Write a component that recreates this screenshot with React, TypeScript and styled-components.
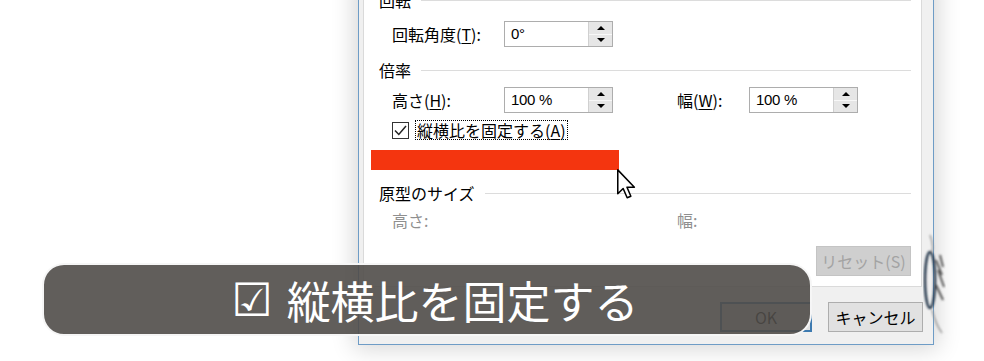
import React from "react";
import styled, { createGlobalStyle } from "styled-components";

const GlobalStyle = createGlobalStyle`
  html, body {
    margin: 0;
    padding: 0;
    background: #ffffff;
    overflow: hidden;
  }
  body {
    font-family: "Noto Sans CJK JP", "Noto Sans", sans-serif;
  }
`;

const Stage = styled.div`
  position: relative;
  width: 984px;
  height: 361px;
  overflow: hidden;
  background: #ffffff;
`;

const DialogWindow = styled.div`
  width: 574px;
  margin: -20px 0 0 358px;
  border: 1px solid #6e9cc6;
  border-top: none;
  background: #f0f0f0;
  box-shadow: 0 0 22px 4px rgba(0, 0, 0, 0.16);
  display: flex;
  flex-direction: column;
`;

const Panel = styled.div`
  margin: 0 11px 0 4px;
  padding: 10px 10px 10px 15px;
  background: #ffffff;
  border: 1px solid #dadada;
  border-top: none;
  display: flex;
  flex-direction: column;
  color: #000;
  font-size: 16px;
  line-height: 20px;
`;

const GroupHeading = styled.div<{ $gap: number }>`
  display: flex;
  align-items: center;
  gap: 10px;
  height: 20px;
  margin-top: ${(p) => p.$gap}px;
  white-space: nowrap;

  &::after {
    content: "";
    flex: 1;
    height: 1px;
    background: #dcdcdc;
    box-shadow: 0 1px 0 #ffffff;
  }
`;

const FieldGrid = styled.div<{ $gap: number; $muted?: boolean }>`
  display: grid;
  grid-template-columns: 112px 109px 64px 72px 109px;
  align-items: center;
  margin: ${(p) => p.$gap}px 0 0 13px;
  color: ${(p) => (p.$muted ? "#8f8f8f" : "#000")};
`;

const Label = styled.span<{ $col?: number }>`
  grid-column: ${(p) => p.$col ?? "auto"};
  white-space: nowrap;
`;

const Key = styled.span`
  text-decoration: underline;
  text-underline-offset: 2px;
`;

const SpinBox = styled.div<{ $col?: number }>`
  grid-column: ${(p) => p.$col ?? "auto"};
  height: 26px;
  box-sizing: border-box;
  border: 1px solid #adadad;
  background: #fff;
  display: flex;
`;

const SpinValue = styled.div`
  flex: 1;
  padding-left: 6px;
  font-family: "Liberation Sans", Arial, sans-serif;
  font-size: 15px;
  line-height: 24px;
  letter-spacing: -0.3px;
`;

const SpinButtons = styled.div`
  width: 23px;
  display: flex;
  flex-direction: column;
  border-left: 1px solid #d0d0d0;
`;

const SpinHalf = styled.div<{ $down?: boolean }>`
  flex: 1;
  background: #e6e6e6;
  border-top: ${(p) => (p.$down ? "1px solid #f8f8f8" : "none")};
  display: flex;
  align-items: center;
  justify-content: center;

  &::before {
    content: "";
    width: 0;
    height: 0;
    border-left: 4px solid transparent;
    border-right: 4px solid transparent;
    ${(p) =>
      p.$down ? "border-top: 4px solid #000;" : "border-bottom: 4px solid #000;"}
  }
`;

const CheckRow = styled.label`
  display: flex;
  align-items: center;
  gap: 6px;
  height: 20px;
  margin: 7px 0 0 13px;
`;

const CheckBox = styled.span`
  width: 17px;
  height: 17px;
  box-sizing: border-box;
  border: 1px solid #333;
  background: #fff;
  display: flex;
  align-items: center;
  justify-content: center;
`;

const FocusLabel = styled.span`
  border: 1px dotted #000;
  padding: 0 1px;
  line-height: 18px;
  white-space: nowrap;
`;

const Highlight = styled.div`
  width: 248px;
  height: 20px;
  margin: 10px 0 0 -8px;
  background: #f4350f;
`;

const ResetRow = styled.div`
  display: flex;
  justify-content: flex-end;
  margin-top: 16px;
`;

const Button = styled.button<{ $variant?: "default" | "disabled" }>`
  width: ${(p) => (p.$variant === "default" ? 92 : 95)}px;
  height: 30px;
  padding: 0;
  box-sizing: border-box;
  font-family: "Noto Sans CJK JP", sans-serif;
  font-size: 16px;
  line-height: 20px;
  color: ${(p) => (p.$variant === "disabled" ? "#a3a3a3" : "#000")};
  background: ${(p) => (p.$variant === "disabled" ? "#cfcfcf" : "#e1e1e1")};
  border: ${(p) =>
    p.$variant === "default"
      ? "2px solid #3d7ab0"
      : p.$variant === "disabled"
      ? "1px solid #c4c4c4"
      : "1px solid #adadad"};
`;

const Footer = styled.div`
  display: flex;
  justify-content: flex-end;
  gap: 16px;
  padding: 15px 10px 12px 0;
`;

const Caption = styled.div`
  position: absolute;
  left: 42px;
  top: 263px;
  width: 770px;
  height: 73px;
  box-sizing: border-box;
  padding-left: 16px;
  border-radius: 22px;
  border: 2px solid rgba(255, 255, 255, 0.95);
  background: rgba(80, 77, 73, 0.9);
  color: #ffffff;
  display: flex;
  align-items: center;
  justify-content: center;
  font-size: 44px;
  line-height: 1;
  white-space: nowrap;
`;

const CheckGlyph = styled.span`
  font-family: "DejaVu Sans", sans-serif;
  font-size: 46px;
  margin-right: 14px;
`;

const Cursor = styled.svg`
  position: absolute;
  left: 617px;
  top: 169px;
`;

const Blur = styled.svg`
  position: absolute;
  left: 916px;
  top: 225px;
`;

export default function App() {
  return (
    <>
      <GlobalStyle />
      <Stage>
        <DialogWindow>
          <Panel>
            <GroupHeading $gap={0}>回転</GroupHeading>
            <FieldGrid $gap={11}>
              <Label>
                回転角度(<Key>T</Key>):
              </Label>
              <SpinBox>
                <SpinValue>0°</SpinValue>
                <SpinButtons>
                  <SpinHalf />
                  <SpinHalf $down />
                </SpinButtons>
              </SpinBox>
            </FieldGrid>

            <GroupHeading $gap={13}>倍率</GroupHeading>
            <FieldGrid $gap={7}>
              <Label>
                高さ(<Key>H</Key>):
              </Label>
              <SpinBox>
                <SpinValue>100 %</SpinValue>
                <SpinButtons>
                  <SpinHalf />
                  <SpinHalf $down />
                </SpinButtons>
              </SpinBox>
              <Label $col={4}>
                幅(<Key>W</Key>):
              </Label>
              <SpinBox $col={5}>
                <SpinValue>100 %</SpinValue>
                <SpinButtons>
                  <SpinHalf />
                  <SpinHalf $down />
                </SpinButtons>
              </SpinBox>
            </FieldGrid>
            <CheckRow>
              <CheckBox>
                <svg width="13" height="11" viewBox="0 0 13 11">
                  <path d="M1 5.5 L4.8 9.5 L12 1" fill="none" stroke="#222" strokeWidth="1.5" />
                </svg>
              </CheckBox>
              <FocusLabel>
                縦横比を固定する(<Key>A</Key>)
              </FocusLabel>
            </CheckRow>
            <Highlight />

            <GroupHeading $gap={13}>原型のサイズ</GroupHeading>
            <FieldGrid $gap={7} $muted>
              <Label>高さ:</Label>
              <Label $col={4}>幅:</Label>
            </FieldGrid>
            <ResetRow>
              <Button $variant="disabled">リセット(S)</Button>
            </ResetRow>
          </Panel>
          <Footer>
            <Button $variant="default">OK</Button>
            <Button>キャンセル</Button>
          </Footer>
        </DialogWindow>

        <Cursor width="20" height="31" viewBox="0 0 13 20">
          <path
            d="M0.5 0.5 L0.5 16 L4 12.6 L6.6 18.6 L9 17.6 L6.5 11.8 L11.3 11.8 Z"
            fill="#fff"
            stroke="#000"
            strokeWidth="1"
            strokeLinejoin="round"
          />
        </Cursor>

        <Blur width="40" height="115" viewBox="0 0 40 115">
          <defs>
            <filter id="soft">
              <feGaussianBlur stdDeviation="0.8" />
            </filter>
          </defs>
          <g filter="url(#soft)">
            <ellipse cx="14" cy="55" rx="5" ry="28" fill="none" stroke="#22364a" strokeWidth="2.5" />
            <path d="M20 35 L26 50 M22 45 L28 62 M20 60 L27 75 M24 30 L27 42" stroke="#555" strokeWidth="2" />
            <path d="M14 10 Q18 20 16 27 M16 85 Q20 100 26 108" stroke="#999" strokeWidth="1.5" fill="none" />
          </g>
        </Blur>

        <Caption>
          <CheckGlyph>☑</CheckGlyph>縦横比を固定する
        </Caption>
      </Stage>
    </>
  );
}
